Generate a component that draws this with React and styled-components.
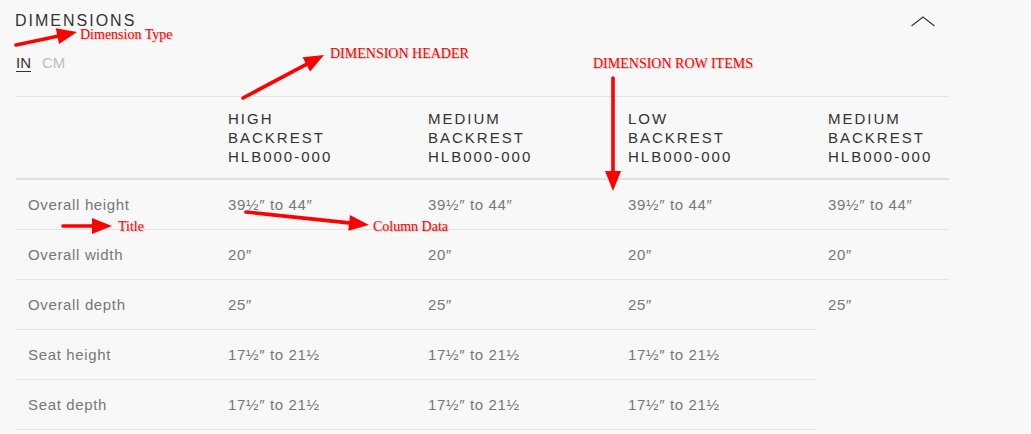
import React from "react";
import styled, { createGlobalStyle } from "styled-components";

const GlobalStyle = createGlobalStyle`
  html, body {
    margin: 0;
    padding: 0;
    background: #f8f8f8;
  }
  body {
    font-family: "Liberation Sans", Arial, sans-serif;
  }
`;

const Stage = styled.div`
  position: relative;
  width: 1031px;
  height: 434px;
  overflow: hidden;
  background: #f8f8f8;
`;

const Section = styled.section`
  width: 933px;
  padding: 11px 0 0 16px;
`;

const TopBar = styled.div`
  display: flex;
  align-items: center;
  justify-content: space-between;
  height: 20px;
  padding-right: 14px;
`;

const Title = styled.h2`
  margin: 0 0 0 -1px;
  font-size: 16px;
  line-height: 20px;
  font-weight: 400;
  letter-spacing: 2px;
  color: #333;
`;

const Units = styled.div`
  display: flex;
  gap: 11px;
  margin: 23px 0 24px;
  font-size: 15px;
  line-height: 18px;
`;

const Unit = styled.span`
  color: ${(p) => (p.$active ? "#333" : "#bdbdbd")};
  text-decoration: ${(p) => (p.$active ? "underline" : "none")};
  text-underline-offset: 3px;
  cursor: pointer;
`;

const Grid = styled.div`
  display: grid;
  grid-template-columns: 200px 200px 200px 200px 133px;
`;

const HeadCell = styled.div`
  padding: 12px;
  border-top: 1px solid #e1e3e8;
  border-bottom: 2px solid #dcdfe4;
  font-size: 15px;
  line-height: 19px;
  letter-spacing: 2px;
  text-transform: uppercase;
  color: #333;
`;

const Cell = styled.div`
  box-sizing: border-box;
  height: 50px;
  display: flex;
  align-items: center;
  padding: 0 12px;
  border-bottom: 1px solid ${(p) => (p.$line ? "#e3e3e3" : "transparent")};
  font-size: 15px;
  letter-spacing: 0.65px;
  color: #777;
  white-space: nowrap;
`;

const Overlay = styled.svg`
  position: absolute;
  inset: 0;
  pointer-events: none;
`;

const Note = styled.span`
  position: absolute;
  left: ${(p) => p.$x}px;
  top: ${(p) => p.$y}px;
  font-family: "Liberation Serif", "Times New Roman", serif;
  font-size: 14px;
  line-height: 14px;
  color: #f00;
  white-space: nowrap;
  text-shadow: 1px 1px 1px rgba(0, 0, 0, 0.22);
  pointer-events: none;
`;

const labels = ["Overall height", "Overall width", "Overall depth", "Seat height", "Seat depth"];

const columns = [
  {
    name: ["High", "Backrest", "HLB000-000"],
    values: ["39½″ to 44″", "20″", "25″", "17½″ to 21½", "17½″ to 21½"],
  },
  {
    name: ["Medium", "Backrest", "HLB000-000"],
    values: ["39½″ to 44″", "20″", "25″", "17½″ to 21½", "17½″ to 21½"],
  },
  {
    name: ["Low", "Backrest", "HLB000-000"],
    values: ["39½″ to 44″", "20″", "25″", "17½″ to 21½", "17½″ to 21½"],
  },
  {
    name: ["Medium", "Backrest", "HLB000-000"],
    values: ["39½″ to 44″", "20″", "25″"],
  },
];

const Arrow = ({ from, to }) => {
  const [x1, y1] = from;
  const [x2, y2] = to;
  const len = Math.hypot(x2 - x1, y2 - y1);
  const ux = (x2 - x1) / len;
  const uy = (y2 - y1) / len;
  const bx = x2 - ux * 20;
  const by = y2 - uy * 20;
  const px = -uy * 8;
  const py = ux * 8;
  return (
    <g>
      <line x1={x1} y1={y1} x2={bx} y2={by} stroke="#f00" strokeWidth="3.6" strokeLinecap="round" />
      <polygon points={`${x2},${y2} ${bx + px},${by + py} ${bx - px},${by - py}`} fill="#f00" />
    </g>
  );
};

const Chevron = () => (
  <svg width="24" height="11" viewBox="0 0 24 11">
    <polyline points="0.5,10 12,1 23.5,10" fill="none" stroke="#333" strokeWidth="1.1" />
  </svg>
);

export default function App() {
  return (
    <Stage>
      <GlobalStyle />
      <Section>
        <TopBar>
          <Title>DIMENSIONS</Title>
          <Chevron />
        </TopBar>
        <Units>
          <Unit $active>IN</Unit>
          <Unit>CM</Unit>
        </Units>
        <Grid>
          <HeadCell />
          {columns.map((col, i) => (
            <HeadCell key={i}>
              {col.name.map((line) => (
                <div key={line}>{line}</div>
              ))}
            </HeadCell>
          ))}
          {labels.map((label, r) => (
            <React.Fragment key={label}>
              <Cell $line>{label}</Cell>
              {columns.map((col, c) => (
                <Cell
                  key={c}
                  $line={col.values.length === labels.length || r < col.values.length - 1}
                >
                  {col.values[r]}
                </Cell>
              ))}
            </React.Fragment>
          ))}
        </Grid>
      </Section>

      <Overlay width="1031" height="434">
        <Arrow from={[16, 45]} to={[77, 32]} />
        <Arrow from={[243, 98]} to={[324, 55]} />
        <Arrow from={[613, 78]} to={[613, 191]} />
        <Arrow from={[63, 226]} to={[112, 226]} />
        <Arrow from={[246, 212]} to={[369, 225]} />
      </Overlay>
      <Note $x={80} $y={28}>Dimension Type</Note>
      <Note $x={330} $y={47}>DIMENSION HEADER</Note>
      <Note $x={593} $y={57}>DIMENSION ROW ITEMS</Note>
      <Note $x={118} $y={220}>Title</Note>
      <Note $x={373} $y={220}>Column Data</Note>
    </Stage>
  );
}
